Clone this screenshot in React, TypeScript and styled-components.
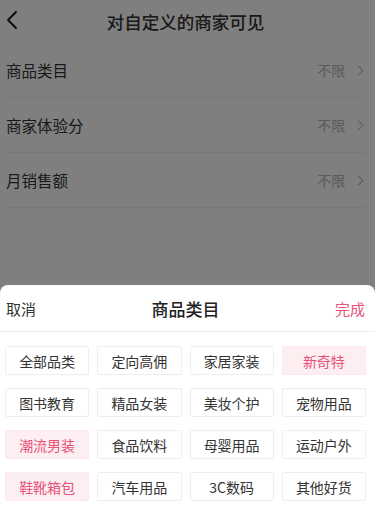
import React, { FC } from "react";
import styled, { createGlobalStyle } from "styled-components";

const GlobalStyle = createGlobalStyle`
  html, body {
    margin: 0;
    padding: 0;
    background: #fff;
  }
  body {
    font-family: "Noto Sans CJK SC", "Noto Sans", "Liberation Sans", sans-serif;
  }
  * { box-sizing: border-box; }
`;

const Screen = styled.div`
  position: relative;
  width: 375px;
  height: 527px;
  overflow: hidden;
  background: #fff;
`;

const NavBar = styled.div`
  height: 43px;
  display: flex;
  align-items: center;
  justify-content: center;
  position: relative;
  padding-right: 4px;
  font-size: 17.5px;
  font-weight: 500;
  color: #333;
`;

const BackButton = styled.div`
  position: absolute;
  left: 6px;
  top: 10px;
  width: 16px;
  height: 20px;
  display: flex;
`;

const List = styled.div`
  display: flex;
  flex-direction: column;
`;

const Row = styled.div`
  height: 55px;
  margin: 0 10px 0 5px;
  padding-left: 1px;
  display: flex;
  align-items: center;
  border-bottom: 1px solid #eeeeee;
  font-size: 15.5px;
  color: #333;
`;

const RowLabel = styled.span`
  flex: 1;
`;

const RowValue = styled.span`
  font-size: 14px;
  color: #b5b5b5;
  margin-right: 12px;
`;

const Mask = styled.div`
  position: absolute;
  inset: 0;
  background: rgba(0, 0, 0, 0.5);
`;

const Sheet = styled.div`
  position: absolute;
  left: 0;
  right: 0;
  bottom: 0;
  height: 242px;
  background: #fff;
  border-radius: 8px 8px 0 0;
  display: flex;
  flex-direction: column;
`;

const SheetHeader = styled.div`
  height: 47px;
  padding: 0 10px 0 6px;
  display: flex;
  align-items: center;
  justify-content: space-between;
  border-bottom: 1px solid #eeeeee;
`;

const SheetAction = styled.span<{ $primary?: boolean }>`
  font-size: 15px;
  color: ${(p) => (p.$primary ? "#e8537a" : "#333")};
  width: 40px;
  text-align: ${(p) => (p.$primary ? "right" : "left")};
`;

const SheetTitle = styled.span`
  font-size: 17px;
  font-weight: 500;
  color: #222;
`;

const TagGrid = styled.div`
  display: grid;
  grid-template-columns: repeat(4, 1fr);
  column-gap: 8px;
  row-gap: 13px;
  padding: 14px 9px 0 5px;
`;

const Tag = styled.div<{ $active?: boolean }>`
  height: 29px;
  display: flex;
  align-items: center;
  justify-content: center;
  font-size: 14px;
  border-radius: 2px;
  border: 1px solid ${(p) => (p.$active ? "#fce8ee" : "#eeeeee")};
  background: ${(p) => (p.$active ? "#fdeef2" : "#fff")};
  color: ${(p) => (p.$active ? "#e8537a" : "#333")};
`;

const Chevron: FC<{ color: string; size: number; dir: "left" | "right"; stroke?: number }> = ({
  color,
  size,
  dir,
  stroke = 1.6,
}) => (
  <svg width={size * 0.6} height={size} viewBox="0 0 12 20" fill="none">
    <path
      d={dir === "left" ? "M10 2 L2 10 L10 18" : "M2 3 L9 10 L2 17"}
      stroke={color}
      strokeWidth={stroke}
      strokeLinecap="round"
      strokeLinejoin="round"
    />
  </svg>
);

const rows = ["商品类目", "商家体验分", "月销售额"];

const tags = [
  { name: "全部品类" },
  { name: "定向高佣" },
  { name: "家居家装" },
  { name: "新奇特", active: true },
  { name: "图书教育" },
  { name: "精品女装" },
  { name: "美妆个护" },
  { name: "宠物用品" },
  { name: "潮流男装", active: true },
  { name: "食品饮料" },
  { name: "母婴用品" },
  { name: "运动户外" },
  { name: "鞋靴箱包", active: true },
  { name: "汽车用品" },
  { name: "3C数码" },
  { name: "其他好货" },
];

const App: FC = () => {
  return (
    <Screen>
      <GlobalStyle />
      <NavBar>
        <BackButton>
          <Chevron color="#111" size={20} dir="left" stroke={1.8} />
        </BackButton>
        对自定义的商家可见
      </NavBar>
      <List>
        {rows.map((r) => (
          <Row key={r}>
            <RowLabel>{r}</RowLabel>
            <RowValue>不限</RowValue>
            <Chevron color="#b5b5b5" size={13} dir="right" />
          </Row>
        ))}
      </List>

      <Mask />

      <Sheet>
        <SheetHeader>
          <SheetAction>取消</SheetAction>
          <SheetTitle>商品类目</SheetTitle>
          <SheetAction $primary>完成</SheetAction>
        </SheetHeader>
        <TagGrid>
          {tags.map((t) => (
            <Tag key={t.name} $active={t.active}>
              {t.name}
            </Tag>
          ))}
        </TagGrid>
      </Sheet>
    </Screen>
  );
};

export default App;
